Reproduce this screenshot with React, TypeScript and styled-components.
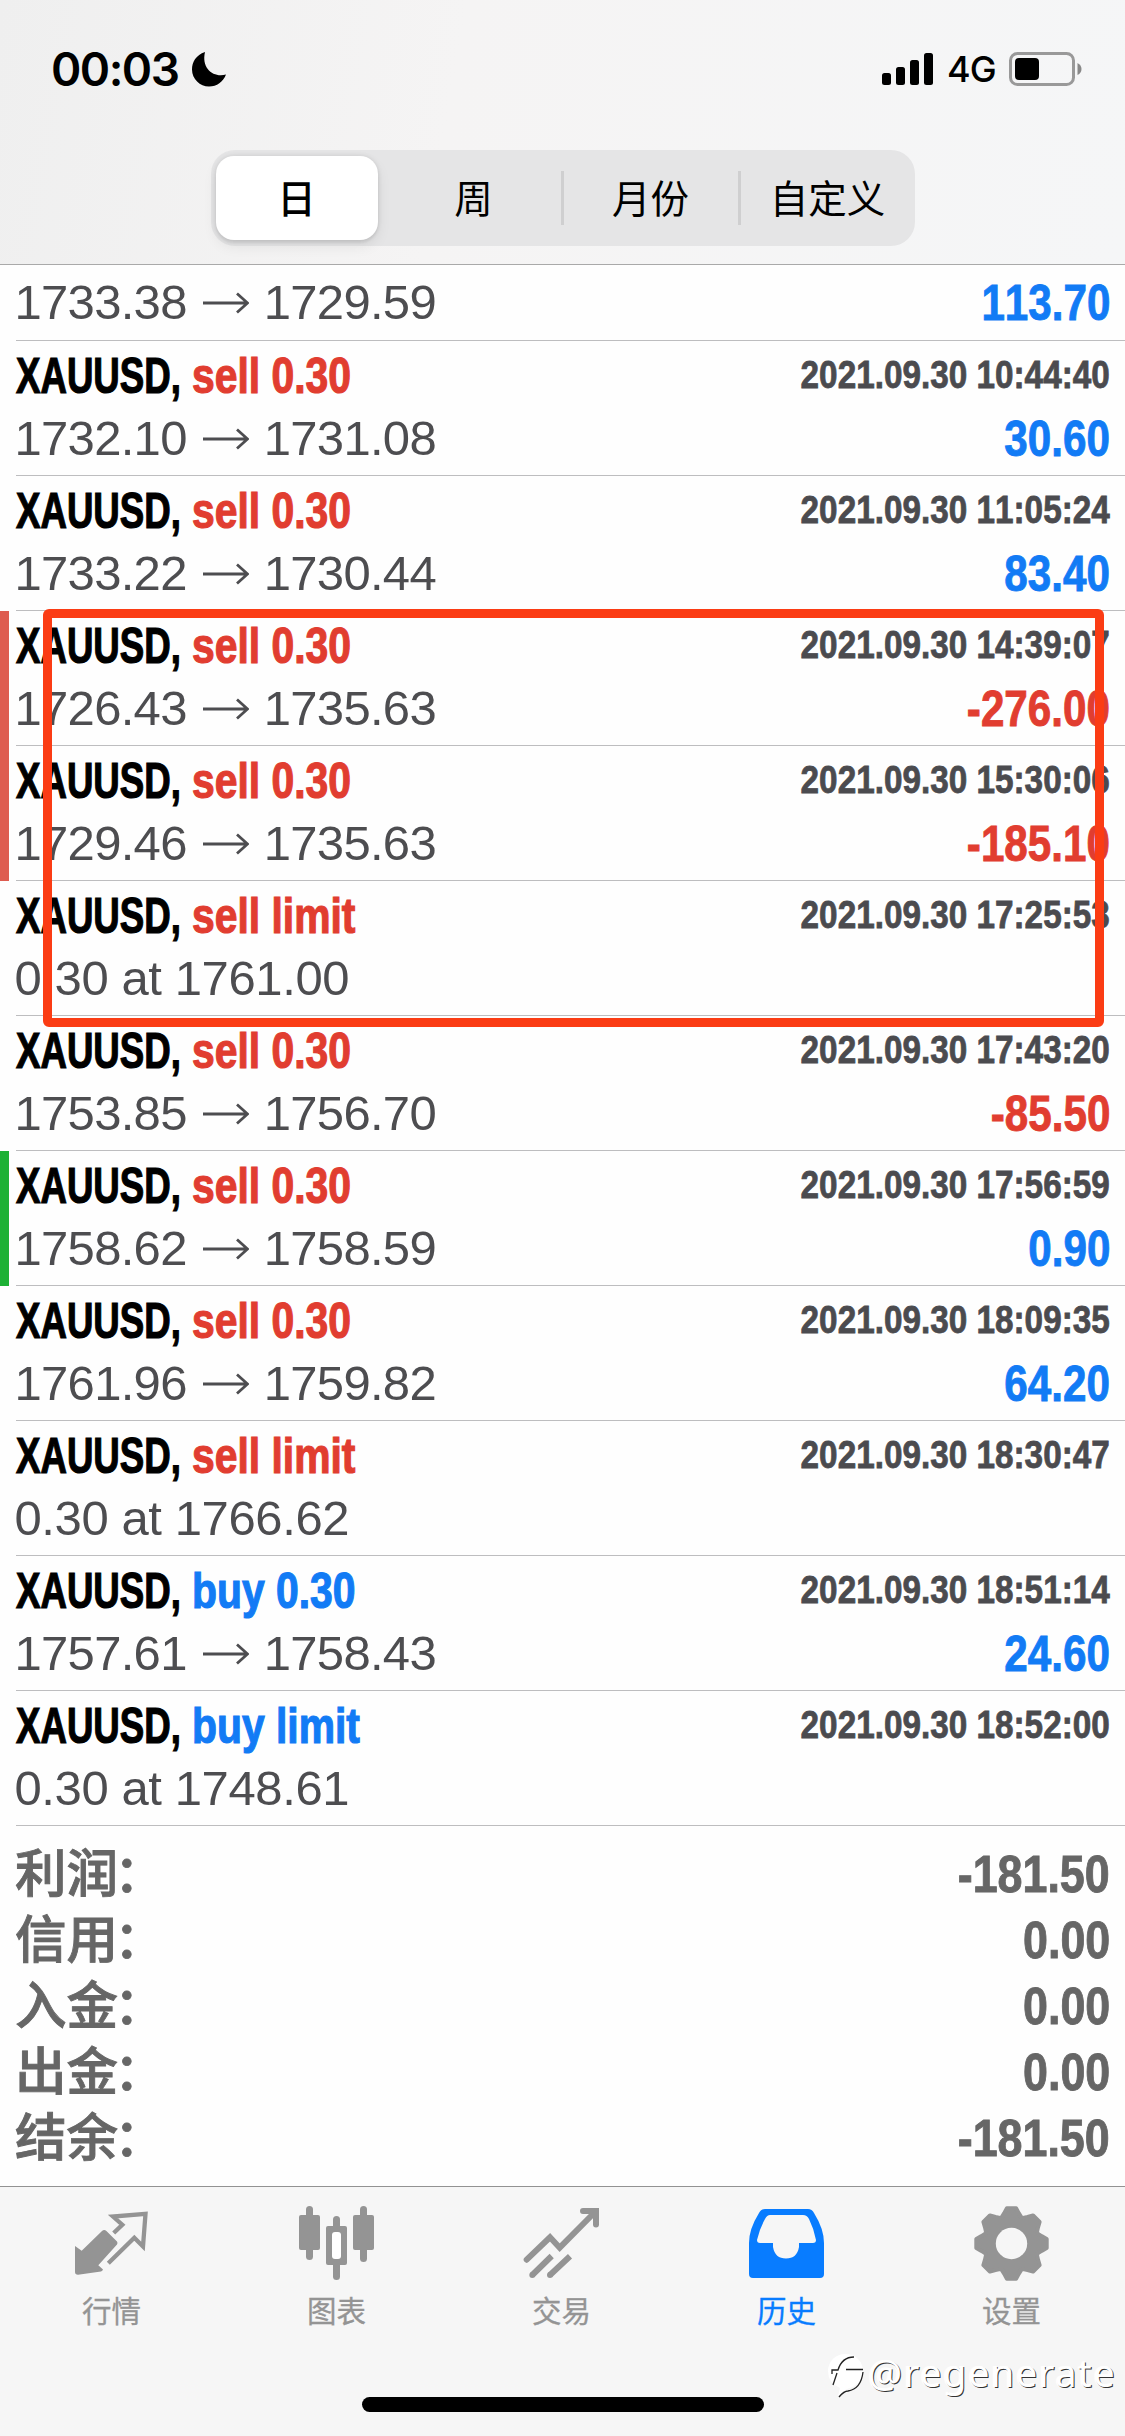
import React from "react";
import styled, { createGlobalStyle } from "styled-components";

const Global = createGlobalStyle`
  *{box-sizing:border-box}
  body{margin:0;background:#fefefe;}
`;
const latin = `"Liberation Sans", Arial, "Noto Sans CJK SC", sans-serif`;
const cjk = `"Noto Sans CJK SC", sans-serif`;

const Screen = styled.div`
  position: relative; width: 1125px; height: 2436px; overflow: hidden;
  display: flex; flex-direction: column; background: #fefefe; font-family: ${latin};
`;
const Header = styled.header`
  height: 265px; border-bottom: 1px solid #a9a9a9; display: flex; flex-direction: column; align-items: center;
  background: linear-gradient(100deg, #efefef 0%, #f5f4f4 40%, #f5f6f7 100%);
`;
const StatusBar = styled.div`
  width: 100%; height: 150px; padding: 51px 43px 0 51px; display: flex; justify-content: space-between; align-items: flex-start;
`;
const StatusGroup = styled.div`display: flex; align-items: center; height: 36px;`;
const Clock = styled.span`
  font: 600 46px/36px Inter, sans-serif; letter-spacing: -1.5px; color: #000; width: 141px; white-space: nowrap;
`;
const Network = styled.span`
  font: 500 36px/36px Inter, sans-serif; width: 74px; padding-left: 13px; white-space: nowrap; letter-spacing: -1px;
`;
const Segments = styled.nav`
  width: 704px; height: 96px; border-radius: 24px; background: #e5e5e6; display: flex; align-items: center;
`;
const Segment = styled.button<{ $on?: boolean; $line?: boolean }>`
  flex: ${p => (p.$on ? "0 0 162px" : "1")}; height: ${p => (p.$on ? 84 : 54)}px; border: 0; padding: 0 0 4px;
  margin: ${p => (p.$on ? "0 9px 0 5px" : "0")};
  border-radius: ${p => (p.$on ? 18 : 0)}px; background: ${p => (p.$on ? "#fff" : "transparent")};
  box-shadow: ${p => (p.$on ? "0 6px 14px rgba(0,0,0,.08), 0 3px 3px rgba(0,0,0,.05), 0 0 5px rgba(0,0,0,.1)" : "none")};
  border-left: ${p => (p.$line ? "3px solid #cfcfd0" : "0")};
  font: ${p => (p.$on ? 500 : 400)} 38.5px/50px ${cjk}; color: #000;
`;
const List = styled.main`display: flex; flex-direction: column;`;
const Row = styled.div<{ $mark?: string; $short?: boolean }>`
  height: ${p => (p.$short ? 76 : 135)}px; padding-left: 7px; border-left: 9px solid ${p => p.$mark || "transparent"};
`;
const RowBody = styled.div<{ $short?: boolean }>`
  height: 100%; border-bottom: 1px solid #bdbdbf; padding: ${p => (p.$short ? 7 : 3)}px 15px 0 0;
`;
const Line = styled.div<{ $h: number }>`
  height: ${p => p.$h}px; display: flex; align-items: center; justify-content: space-between;
`;
const Title = styled.div`
  display: flex; font-size: 49.5px; line-height: 62px; font-weight: 700; white-space: nowrap;
  -webkit-text-stroke: 1.2px currentColor;
`;
const Symbol = styled.span`width: 176px; color: #000; transform: scaleX(.74); transform-origin: left;`;
const Action = styled.span<{ $buy: boolean }>`
  color: ${p => (p.$buy ? "#127bf5" : "#e13d30")}; transform: scaleX(.825); transform-origin: left;
`;
const Stamp = styled.span`
  font-size: 39.5px; font-weight: 700; line-height: 62px; color: #4b4b4f; white-space: nowrap; font-kerning: none;
  padding-bottom: 4px; -webkit-text-stroke: .8px currentColor;
  transform: scaleX(.843); transform-origin: right;
`;
const Prices = styled.div<{ $pending: boolean }>`
  display: flex; align-items: center; margin-left: -1.5px; padding-bottom: 1px; font-size: 49px; line-height: 61px;
  color: #4d4d50; white-space: nowrap; font-kerning: none;
  letter-spacing: ${p => (p.$pending ? -0.4 : -0.7)}px;
`;
const Arrow = styled.svg`width: 46px; height: 22px; margin: 0 15px 0 16px;`;
const Profit = styled.span<{ $loss: boolean }>`
  font-size: 49.5px; font-weight: 700; line-height: 62px; color: ${p => (p.$loss ? "#e13d30" : "#127bf5")}; font-kerning: none;
  -webkit-text-stroke: .9px currentColor; transform: scaleX(.852); transform-origin: right;
`;
const Summary = styled.section`height: 360px; padding: 15px 15px 0 15px;`;
const SumRow = styled.div`height: 66px; display: flex; align-items: center; justify-content: space-between; color: #666;`;
const SumLabel = styled.span`font: 500 51.5px/58px ${cjk}; height: 66px; -webkit-text-stroke: .9px currentColor;`;
const Colon = styled.span`margin-left: -4px;`;
const SumValue = styled.span`
  font-size: 51.5px; font-weight: 700; line-height: 66px; transform: scaleX(.87); transform-origin: right; font-kerning: none;
  -webkit-text-stroke: .9px currentColor;
`;
const TabBar = styled.footer`
  height: 250px; border-top: 1px solid #929292; background: #f6f6f6; display: flex; align-items: flex-start;
`;
const Tab = styled.button<{ $on?: boolean }>`
  flex: 1; border: 0; background: none; padding: 16px 2px 0 0; display: flex; flex-direction: column; align-items: center;
  color: ${p => (p.$on ? "#087cff" : "#949494")}; font: 400 29.5px/40px ${cjk}; -webkit-text-stroke: .3px currentColor;
`;
const TabIcon = styled.svg`width: 81px; height: 84px; margin-bottom: 2px; display: block;`;
const Highlight = styled.div`
  position: absolute; left: 43px; top: 609px; width: 1061px; height: 418px; border: 9px solid #fb3c14; border-radius: 6px;
`;
const HomeIndicator = styled.div`
  position: absolute; left: 362px; top: 2397px; width: 402px; height: 15px; border-radius: 8px; background: #000;
`;
const Watermark = styled.div`
  position: absolute; left: 827px; top: 2347px; height: 50px; display: flex; align-items: center;
  font: 400 38px/50px "Noto Sans", sans-serif; letter-spacing: 1.5px; color: #fff;
  text-shadow: 1px 1px 0 #333, -1px 0 1px #fff; white-space: nowrap;
`;
const WatermarkLogo = styled.svg`width: 38px; height: 48px; margin: 8px 3px 0 0;`;

type Trade = { act: string; time: string; from?: string; to?: string; at?: string; pl?: string; mark?: string };
const trades: Trade[] = [
  { act: "sell 0.30", time: "10:44:40", from: "1732.10", to: "1731.08", pl: "30.60" },
  { act: "sell 0.30", time: "11:05:24", from: "1733.22", to: "1730.44", pl: "83.40" },
  { act: "sell 0.30", time: "14:39:07", from: "1726.43", to: "1735.63", pl: "-276.00", mark: "#de5c50" },
  { act: "sell 0.30", time: "15:30:06", from: "1729.46", to: "1735.63", pl: "-185.10", mark: "#de5c50" },
  { act: "sell limit", time: "17:25:53", at: "0.30 at 1761.00" },
  { act: "sell 0.30", time: "17:43:20", from: "1753.85", to: "1756.70", pl: "-85.50" },
  { act: "sell 0.30", time: "17:56:59", from: "1758.62", to: "1758.59", pl: "0.90", mark: "#1db135" },
  { act: "sell 0.30", time: "18:09:35", from: "1761.96", to: "1759.82", pl: "64.20" },
  { act: "sell limit", time: "18:30:47", at: "0.30 at 1766.62" },
  { act: "buy 0.30", time: "18:51:14", from: "1757.61", to: "1758.43", pl: "24.60" },
  { act: "buy limit", time: "18:52:00", at: "0.30 at 1748.61" },
];
const totals = [["利润", "-181.50"], ["信用", "0.00"], ["入金", "0.00"], ["出金", "0.00"], ["结余", "-181.50"]];

const PriceLine = ({ t }: { t: Trade }) => (
  <Line $h={62}>
    <Prices $pending={!!t.at}>
      {t.at ? <span>{t.at}</span> : (
        <>
          <span>{t.from}</span>
          <Arrow viewBox="0 0 46 22" fill="none" stroke="#4d4d50" strokeWidth="2.8"><path d="M0 11H44M34 1.500L44.500 11L34 20.500" /></Arrow>
          <span>{t.to}</span>
        </>
      )}
    </Prices>
    {t.pl && <Profit $loss={t.pl[0] === "-"}>{t.pl}</Profit>}
  </Line>
);

const gear = (() => {
  const pts: string[] = [];
  for (let i = 0; i < 8; i++) {
    const a = (i * Math.PI) / 4;
    for (const [d, r] of [[-0.36, 28], [-0.24, 31], [-0.13, 35.5], [0.13, 35.5], [0.24, 31], [0.36, 28]]) {
      pts.push(`${(40.5 + r * Math.sin(a + d)).toFixed(1)} ${(40.5 - r * Math.cos(a + d)).toFixed(1)}`);
    }
  }
  return "M" + pts.join("L") + "Z";
})();

const QuotesIcon = () => (
  <TabIcon viewBox="0 0 81 84" fill="currentColor">
    <path d="M4 43L10.700 47.700L31 28Q33.200 26 35.400 28L46 38.500Q47 40 46 41.500L27.300 62.300L32 66.500Q31.500 68 30 68.500L7 71.700Q4 71.700 4 69Z" />
    <path d="M42.700 30L51.300 21.700L42 13.500L74.500 10.800L72 43.500L63.300 34.700L37.300 60.300" fill="none" stroke="currentColor" strokeWidth="4.300" />
  </TabIcon>
);
const ChartIcon = () => (
  <TabIcon viewBox="0 0 81 84" fill="currentColor">
    <rect x="3" y="12" width="21" height="35" rx="2" /><rect x="10" y="3" width="7" height="54" rx="3.500" />
    <rect x="57" y="12" width="21" height="35" rx="2" /><rect x="64" y="3" width="7" height="56" rx="3.500" />
    <rect x="37" y="13" width="7" height="64" rx="3.500" /><rect x="30" y="23" width="21" height="39" rx="2" />
    <rect x="36" y="29" width="9" height="27" rx="3" fill="#fff" />
  </TabIcon>
);
const TradeIcon = () => (
  <TabIcon viewBox="0 0 81 84" fill="none" stroke="currentColor" strokeWidth="6">
    <path d="M5.700 56.700L29 34.300L38.700 44.700L74 9M62 8H75V21.500" strokeLinecap="round" />
    <path d="M11.300 72L30.700 53M29 72L49 53.300" />
    <circle cx="11.300" cy="72" r="3" fill="currentColor" stroke="none" />
    <circle cx="29" cy="72" r="3" fill="currentColor" stroke="none" />
  </TabIcon>
);
const HistoryIcon = () => (
  <TabIcon viewBox="0 0 81 84" fill="currentColor" fillRule="evenodd">
    <path d="M19 6H62Q66 6 68 10Q78 26 78 40V71Q78 75 74 75H7Q3 75 3 71V40Q3 26 13 10Q15 6 19 6ZM24 12H57Q61 12 63 16Q68 26 70 37Q70 40 67 40H53V44Q51 55.500 40 55.500T27 44V40H14Q11 40 11 37Q14 25 19 16Q21 12 24 12Z" />
  </TabIcon>
);
const SettingsIcon = () => (
  <TabIcon viewBox="0 0 81 84">
    <path d={gear} fill="currentColor" stroke="currentColor" strokeWidth="4" strokeLinejoin="round" />
    <circle cx="40.500" cy="40.500" r="15.700" fill="#f6f6f6" />
  </TabIcon>
);

export default function App() {
  return (
    <Screen>
      <Global />
      <Header>
        <StatusBar>
          <StatusGroup>
            <Clock>00:03</Clock>
            <svg width="34" height="36" viewBox="0 0 34 36"><path d="M13 1C4 4 0 11 0 18.500C0 28 8 35.500 17 35.500C25 35.500 31 31 34 23.500C22 27 9 18 13 1Z" /></svg>
          </StatusGroup>
          <StatusGroup>
            <svg width="52" height="36" viewBox="0 0 52 36">
              <rect x="0" y="22" width="9" height="12" rx="2.500" /><rect x="14" y="16" width="9" height="18" rx="2.500" />
              <rect x="28" y="9" width="9" height="25" rx="2.500" /><rect x="42" y="2" width="9" height="32" rx="2.500" />
            </svg>
            <Network>4G</Network>
            <svg width="74" height="36" viewBox="0 0 74 36">
              <rect x="2.500" y="2.500" width="63" height="31" rx="7" fill="none" stroke="#999" strokeWidth="3" />
              <rect x="7" y="7" width="24" height="22" rx="4" /><path d="M69.500 12Q73.500 14 73.500 18T69.500 24Z" fill="#888" />
            </svg>
          </StatusGroup>
        </StatusBar>
        <Segments>
          <Segment $on>日</Segment><Segment>周</Segment><Segment $line>月份</Segment><Segment $line>自定义</Segment>
        </Segments>
      </Header>
      <List>
        <Row $short><RowBody $short><PriceLine t={{ act: "", time: "", from: "1733.38", to: "1729.59", pl: "113.70" }} /></RowBody></Row>
        {trades.map(t => (
          <Row key={t.time} $mark={t.mark}>
            <RowBody>
              <Line $h={64}>
                <Title><Symbol>XAUUSD,</Symbol><Action $buy={t.act.startsWith("buy")}>{t.act}</Action></Title>
                <Stamp>2021.09.30 {t.time}</Stamp>
              </Line>
              <PriceLine t={t} />
            </RowBody>
          </Row>
        ))}
      </List>
      <Summary>
        {totals.map(([k, v]) => <SumRow key={k}><SumLabel>{k}<Colon>：</Colon></SumLabel><SumValue>{v}</SumValue></SumRow>)}
      </Summary>
      <TabBar>
        <Tab><QuotesIcon />行情</Tab>
        <Tab><ChartIcon />图表</Tab>
        <Tab><TradeIcon />交易</Tab>
        <Tab $on><HistoryIcon />历史</Tab>
        <Tab><SettingsIcon />设置</Tab>
      </TabBar>
      <Highlight />
      <HomeIndicator />
      <Watermark>
        <WatermarkLogo viewBox="0 0 38 48" fill="none" stroke="#222" strokeWidth="1.3">
          <path d="M19 2A17 17 0 0 1 36 19Q35 33 20 37L11 44L13 36Q1 31 1 19A17 17 0 0 1 19 2Z" fill="#fff" stroke="none" />
          <path d="M5 22V18H11Q15 5 27 5M19 17.500H36M10 21L6 33M36 20Q34 37 21 39Q17 39 12 45" />
        </WatermarkLogo>
        @regenerate
      </Watermark>
    </Screen>
  );
}
